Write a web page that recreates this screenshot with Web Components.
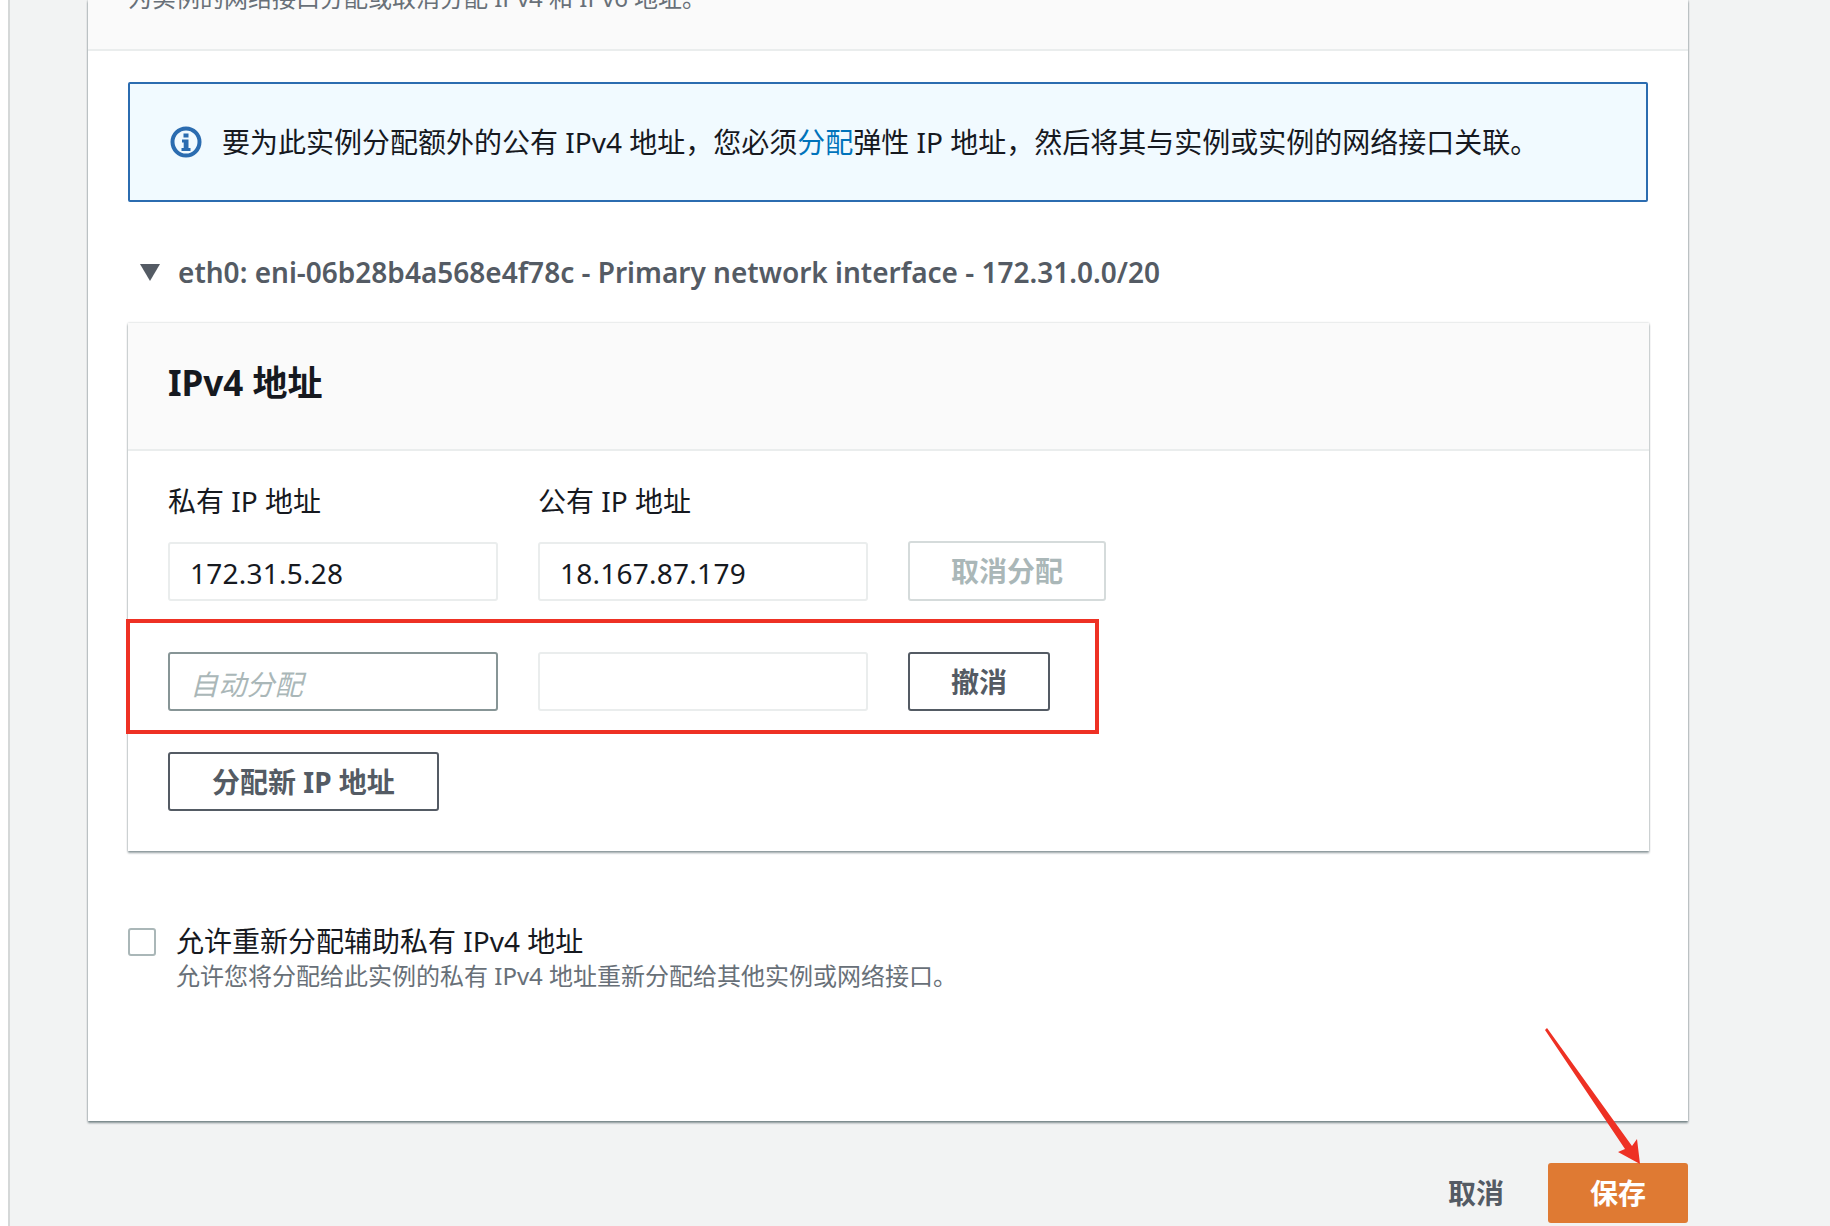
<!DOCTYPE html>
<html lang="zh">
<head>
<meta charset="utf-8">
<title>管理 IP 地址</title>
<style>
  html, body { margin: 0; background: #fff; }
  body {
    font-family: "Noto Sans", "Noto Sans CJK SC", sans-serif;
    font-size: 28px;
    color: #16191f;
  }
</style>
</head>
<body>
  <console-page>
    <settings-card>
      <span slot="description">为实例的网络接口分配或取消分配 IPv4 和 IPv6 地址。</span>
      <info-alert>要为此实例分配额外的公有 IPv4 地址，您必须<a>分配</a>弹性 IP 地址，然后将其与实例或实例的网络接口关联。</info-alert>
      <eni-section>
        <span slot="title">eth0: eni-06b28b4a568e4f78c - Primary network interface - 172.31.0.0/20</span>
        <ip-panel>
          <span slot="title">IPv4 地址</span>
          <ip-row class="first">
            <ip-field label="私有 IP 地址" value="172.31.5.28"></ip-field>
            <ip-field label="公有 IP 地址" value="18.167.87.179"></ip-field>
            <aws-button disabled>取消分配</aws-button>
          </ip-row>
          <ip-row marked>
            <ip-field placeholder="自动分配" strong></ip-field>
            <ip-field></ip-field>
            <aws-button>撤消</aws-button>
          </ip-row>
          <aws-button class="add">分配新 IP 地址</aws-button>
        </ip-panel>
      </eni-section>
      <check-option>
        <span slot="label">允许重新分配辅助私有 IPv4 地址</span>
        <span slot="hint">允许您将分配给此实例的私有 IPv4 地址重新分配给其他实例或网络接口。</span>
      </check-option>
    </settings-card>
    <page-actions>
      <aws-button link>取消</aws-button>
      <aws-button primary>保存</aws-button>
    </page-actions>
  </console-page>

<script>
  class ConsolePage extends HTMLElement {
    constructor() {
      super();
      this.attachShadow({ mode: "open" }).innerHTML = `
      <style>
        :host {
          display: block;
          position: relative;
          box-sizing: border-box;
          height: 1226px;
          margin-left: 8px;
          padding-left: 78px;
          width: 1822px;
          border-left: 2px solid #d5d8d8;
          background: #f2f3f3;
          overflow: hidden;
        }
        svg { position: absolute; left: 0; top: 0; pointer-events: none; }
      </style>
      <slot></slot>
      <!-- red arrow drawn on top of the screenshot -->
      <svg width="1820" height="1226" viewBox="10 0 1820 1226">
        <path fill="#ee3124" d="M1545 1030 L1547 1028 L1632 1146 L1637 1139 L1640 1164 L1618 1152 L1625 1149 Z"/>
      </svg>`;
    }
  }

  class SettingsCard extends HTMLElement {
    constructor() {
      super();
      this.attachShadow({ mode: "open" }).innerHTML = `
      <style>
        :host {
          display: block;
          width: 1600px;
          height: 1121px;
          box-sizing: border-box;
          background: #fff;
          box-shadow: 0 2px 2px rgba(0,28,36,.45), 0 0 2px rgba(0,28,36,.3);
        }
        header {
          height: 49px;
          background: #fafafa;
          border-bottom: 2px solid #eaeded;
          padding-left: 40px;
          color: #687078;
          font-size: 24px;
          line-height: 32px;
          overflow: hidden;
        }
        header div { margin-top: -18px; }
        .body { padding: 31px 40px 0; }
      </style>
      <header><div><slot name="description"></slot></div></header>
      <div class="body"><slot></slot></div>`;
    }
  }

  class InfoAlert extends HTMLElement {
    constructor() {
      super();
      this.attachShadow({ mode: "open" }).innerHTML = `
      <style>
        :host {
          display: flex;
          align-items: center;
          gap: 20px;
          box-sizing: border-box;
          height: 120px;
          width: 1520px;
          padding: 0 40px;
          background: #f1faff;
          border: 2px solid #2b6cb0;
          border-radius: 2px;
          font-size: 28px;
        }
        svg { flex: none; }
        .text { padding-bottom: 3px; }
        ::slotted(a) { color: #0073bb; }
      </style>
      <svg width="32" height="32" viewBox="0 0 32 32">
        <circle cx="16" cy="16" r="13.5" fill="none" stroke="#2b6cb0" stroke-width="4"/>
        <rect x="13.5" y="7.5" width="5" height="4" fill="#2b6cb0"/>
        <path fill="#2b6cb0" d="M12 13.5h6.5V22H20.5v3H11.5v-3h2.2v-5.6H12z"/>
      </svg>
      <div class="text"><slot></slot></div>`;
    }
  }

  class EniSection extends HTMLElement {
    constructor() {
      super();
      this.attachShadow({ mode: "open" }).innerHTML = `
      <style>
        :host { display: block; margin-top: 50px; }
        .head {
          display: flex;
          align-items: center;
          gap: 18px;
          padding-left: 12px;
          height: 40px;
          font-weight: 600;
          color: #545b64;
        }
        svg { flex: none; }
        .body { margin-top: 31px; }
      </style>
      <div class="head">
        <svg width="20" height="17" viewBox="0 0 20 17"><path fill="#545b64" d="M0 0h20L10 17z"/></svg>
        <slot name="title"></slot>
      </div>
      <div class="body"><slot></slot></div>`;
    }
  }

  class IpPanel extends HTMLElement {
    constructor() {
      super();
      this.attachShadow({ mode: "open" }).innerHTML = `
      <style>
        :host {
          display: block;
          width: 1521px;
          box-sizing: border-box;
          background: #fff;
          box-shadow: 0 2px 2px rgba(0,28,36,.4), 0 0 2px rgba(0,28,36,.25);
        }
        header {
          box-sizing: border-box;
          height: 128px;
          padding: 0 40px 11px;
          display: flex;
          align-items: center;
          background: #fafafa;
          border-bottom: 2px solid #eaeded;
          font-size: 35px;
          font-weight: 700;
        }
        .body { padding: 30px 40px 40px; }
      </style>
      <header><slot name="title"></slot></header>
      <div class="body"><slot></slot></div>`;
    }
  }

  class IpRow extends HTMLElement {
    constructor() {
      super();
      this.attachShadow({ mode: "open" }).innerHTML = `
      <style>
        :host {
          display: flex;
          align-items: flex-end;
          gap: 40px;
          position: relative;
          margin-bottom: 41px;
        }
        :host(.first) { margin-bottom: 51px; }
        :host([marked])::after {
          content: "";
          position: absolute;
          left: -42px;
          top: -33px;
          bottom: -23px;
          width: 965px;
          border: 4px solid #ee3124;
          pointer-events: none;
        }
      </style>
      <slot></slot>`;
    }
  }

  class IpField extends HTMLElement {
    constructor() {
      super();
      const label = this.getAttribute("label");
      const value = this.getAttribute("value") || "";
      const placeholder = this.getAttribute("placeholder") || "";
      this.attachShadow({ mode: "open" }).innerHTML = `
      <style>
        :host { display: block; width: 330px; }
        label { display: block; line-height: 40px; margin-bottom: 21px; }
        .box {
          box-sizing: border-box;
          height: 59px;
          padding: 2px 20px 0;
          display: flex;
          align-items: center;
          background: #fff;
          border: 2px solid #eaeded;
          border-radius: 3px;
          font-size: 28px;
          letter-spacing: .25px;
        }
        :host([strong]) .box { border-color: #879596; }
        .ph { color: #aab7b8; font-style: italic; }
      </style>
      ${label ? `<label>${label}</label>` : ""}
      <div class="box">${value}<span class="ph">${placeholder}</span></div>`;
    }
  }

  class AwsButton extends HTMLElement {
    constructor() {
      super();
      this.attachShadow({ mode: "open" }).innerHTML = `
      <style>
        :host {
          display: inline-flex;
          align-items: center;
          justify-content: center;
          box-sizing: border-box;
          height: 59px;
          padding: 0 41px 2px;
          border: 2px solid #545b64;
          border-radius: 3px;
          background: #fff;
          color: #545b64;
          font-weight: 700;
          font-size: 28px;
        }
        :host(.add) { padding: 0 42px 2px; }
        :host([disabled]) { border-color: #d5dbdb; color: #aab7b8; height: 60px; }
        :host([primary]) {
          width: 140px;
          height: 60px;
          padding: 0 0 2px;
          border: none;
          background: #df7a33;
          color: #fff;
        }
        :host([link]) { border: none; background: none; padding: 0 0 2px; }
      </style>
      <slot></slot>`;
    }
  }

  class CheckOption extends HTMLElement {
    constructor() {
      super();
      this.attachShadow({ mode: "open" }).innerHTML = `
      <style>
        :host {
          display: grid;
          grid-template-columns: 28px 1fr;
          column-gap: 20px;
          margin-top: 70px;
        }
        .check {
          box-sizing: border-box;
          width: 28px;
          height: 28px;
          margin-top: 7px;
          background: #fff;
          border: 2px solid #aab7b8;
          border-radius: 3px;
        }
        .label { line-height: 40px; }
        .hint { color: #687078; font-size: 24px; line-height: 32px; margin-top: -1px; }
      </style>
      <div class="check"></div>
      <div>
        <div class="label"><slot name="label"></slot></div>
        <div class="hint"><slot name="hint"></slot></div>
      </div>`;
    }
  }

  class PageActions extends HTMLElement {
    constructor() {
      super();
      this.attachShadow({ mode: "open" }).innerHTML = `
      <style>
        :host {
          display: flex;
          justify-content: flex-end;
          align-items: center;
          gap: 44px;
          width: 1600px;
          margin-top: 42px;
        }
      </style>
      <slot></slot>`;
    }
  }

  customElements.define("console-page", ConsolePage);
  customElements.define("settings-card", SettingsCard);
  customElements.define("info-alert", InfoAlert);
  customElements.define("eni-section", EniSection);
  customElements.define("ip-panel", IpPanel);
  customElements.define("ip-row", IpRow);
  customElements.define("ip-field", IpField);
  customElements.define("aws-button", AwsButton);
  customElements.define("check-option", CheckOption);
  customElements.define("page-actions", PageActions);
</script>
</body>
</html>
